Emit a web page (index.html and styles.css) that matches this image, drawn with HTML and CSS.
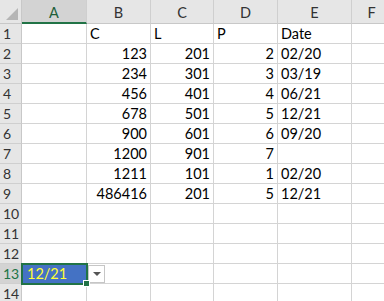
FILE: index.html
```html
<!DOCTYPE html>
<html>
<head>
<meta charset="utf-8">
<link rel="stylesheet" href="styles.css">
</head>
<body>
<div class="sheet">
  <div class="corner"><span class="tri"></span></div>
  <div class="ch sel-col">A</div><div class="ch">B</div><div class="ch">C</div><div class="ch">D</div><div class="ch">E</div><div class="ch">F</div>

  <div class="rh">1</div><div class="c"></div><div class="c">C</div><div class="c">L</div><div class="c">P</div><div class="c">Date</div><div class="c"></div>
  <div class="rh">2</div><div class="c"></div><div class="c n">123</div><div class="c n">201</div><div class="c n">2</div><div class="c">02/20</div><div class="c"></div>
  <div class="rh">3</div><div class="c"></div><div class="c n">234</div><div class="c n">301</div><div class="c n">3</div><div class="c">03/19</div><div class="c"></div>
  <div class="rh">4</div><div class="c"></div><div class="c n">456</div><div class="c n">401</div><div class="c n">4</div><div class="c">06/21</div><div class="c"></div>
  <div class="rh">5</div><div class="c"></div><div class="c n">678</div><div class="c n">501</div><div class="c n">5</div><div class="c">12/21</div><div class="c"></div>
  <div class="rh">6</div><div class="c"></div><div class="c n">900</div><div class="c n">601</div><div class="c n">6</div><div class="c">09/20</div><div class="c"></div>
  <div class="rh">7</div><div class="c"></div><div class="c n">1200</div><div class="c n">901</div><div class="c n">7</div><div class="c"></div><div class="c"></div>
  <div class="rh">8</div><div class="c"></div><div class="c n">1211</div><div class="c n">101</div><div class="c n">1</div><div class="c">02/20</div><div class="c"></div>
  <div class="rh">9</div><div class="c"></div><div class="c n">486416</div><div class="c n">201</div><div class="c n">5</div><div class="c">12/21</div><div class="c"></div>
  <div class="rh">10</div><div class="c"></div><div class="c"></div><div class="c"></div><div class="c"></div><div class="c"></div><div class="c"></div>
  <div class="rh">11</div><div class="c"></div><div class="c"></div><div class="c"></div><div class="c"></div><div class="c"></div><div class="c"></div>
  <div class="rh">12</div><div class="c"></div><div class="c"></div><div class="c"></div><div class="c"></div><div class="c"></div><div class="c"></div>
  <div class="rh sel-row">13</div><div class="c active">12/21<span class="handle"></span></div><div class="c dd-host"><span class="dd"><span class="dd-tri"></span></span></div><div class="c"></div><div class="c"></div><div class="c"></div><div class="c"></div>
  <div class="rh">14</div><div class="c"></div><div class="c"></div><div class="c"></div><div class="c"></div><div class="c"></div><div class="c"></div>
</div>
</body>
</html>
```
FILE: styles.css
```css
html, body {
  margin: 0;
  padding: 0;
  background: #ffffff;
  overflow: hidden;
}
body {
  width: 384px;
  height: 301px;
  font-family: Lato, "Liberation Sans", sans-serif;
  font-size: 14.5px;
  color: #000;
}
.sheet {
  display: grid;
  grid-template-columns: 22px 65px 64px 63px 64px 74px 40px;
  grid-template-rows: 24px repeat(14, 20px);
}
.corner {
  background: #e6e6e6;
  border-right: 1px solid #c8c8c8;
  border-bottom: 1px solid #c8c8c8;
  box-sizing: border-box;
  position: relative;
}
.tri {
  position: absolute;
  right: 3px;
  bottom: 3px;
  width: 0;
  height: 0;
  border-left: 12px solid transparent;
  border-bottom: 12px solid #b5b5b5;
}
.ch {
  background: #e6e6e6;
  border-right: 1px solid #cfcfcf;
  border-bottom: 1px solid #c8c8c8;
  box-sizing: border-box;
  display: flex;
  align-items: center;
  justify-content: center;
  color: #333;
  padding-top: 2px;
}
.ch.sel-col {
  background: #d3d3d3;
  color: #1f5f3a;
  border-bottom: 2px solid #217346;
}
.rh {
  background: #e6e6e6;
  border-right: 1px solid #c8c8c8;
  border-bottom: 1px solid #cfcfcf;
  box-sizing: border-box;
  display: flex;
  align-items: center;
  padding-left: 3px;
  color: #333;
  font-size: 14px;
}
.rh.sel-row {
  background: #d3d3d3;
  color: #217346;
}
.c {
  border-right: 1px solid #d4d4d4;
  border-bottom: 1px solid #d4d4d4;
  box-sizing: border-box;
  display: flex;
  align-items: center;
  padding: 0 3px;
  white-space: nowrap;
  overflow: visible;
}
.c.n {
  justify-content: flex-end;
}
.c.active {
  background: #4472c4;
  color: #ffff33;
  position: relative;
  outline: 2px solid #217346;
  outline-offset: -1px;
  padding-left: 5px;
  z-index: 2;
}
.handle {
  position: absolute;
  right: -4px;
  bottom: -4px;
  width: 5px;
  height: 5px;
  background: #217346;
  border: 1px solid #fff;
}
.dd-host {
  position: relative;
}
.dd {
  position: absolute;
  left: 1px;
  top: 1px;
  width: 17px;
  height: 18px;
  box-sizing: border-box;
  background: #fff;
  border: 1px solid #c6c6c6;
  display: flex;
  align-items: center;
  justify-content: center;
}
.dd-tri {
  width: 0;
  height: 0;
  border-left: 4px solid transparent;
  border-right: 4px solid transparent;
  border-top: 4px solid #555;
}
```
